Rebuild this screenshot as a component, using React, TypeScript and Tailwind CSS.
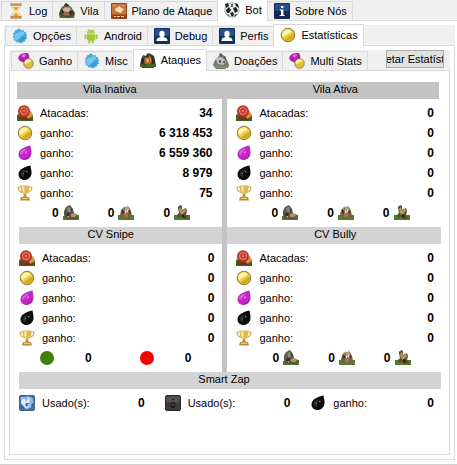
import { useState } from 'react'
import type { ReactNode } from 'react'
import clsx from 'clsx'

function Svg({ children }: { children: ReactNode }) {
  return <svg viewBox="0 0 16 16" className="size-4 shrink-0" aria-hidden="true">{children}</svg>
}

const Hourglass = () => (
  <Svg>
    <path d="M3.500 2h9c0 3-1.500 4-3 6 1.500 2 3 3 3 6h-9c0-3 1.500-4 3-6-1.500-2-3-3-3-6z" fill="#f6ecd2" stroke="#d3b274" strokeWidth=".7" />
    <path d="M5 4h6L8.500 7.500h-1zM8 9l4 5H4z" fill="#eca32b" />
    <path d="M2.500 .5h11v2h-11zM2.500 13.500h11v2h-11z" fill="#a8622c" />
    <path d="M3.500 1h9v.7h-9zM3.500 14h9v.7h-9z" fill="#e3a468" />
  </Svg>
)

const Village = () => (
  <Svg>
    <path d="M0 11l2-6 5-4 5 3 4 6-2 5H2z" fill="#3f4a2c" />
    <path d="M3 5l4-3 5 2 2 5-4 4-6-1-2-3z" fill="#7c6a56" />
    <path d="M4 6l3-2 4 1 1 3-4 1-4-1z" fill="#cdb595" />
    <path d="M5 2l2-2 3 2-2 2zM11 7l3 2-2 3-2-2zM2 7l2 0 1 3-2 1z" fill="#332a24" />
    <path d="M5 9h2v3H5zM8 10h2v2H8z" fill="#a3664a" />
    <path d="M0 12l4 1 4 1 5-1 3-2-1 4H1z" fill="#4d6b27" />
  </Svg>
)

const Plan = () => (
  <Svg>
    <rect width="16" height="16" rx="1" fill="#8b451a" />
    <path d="M1 1h14v10.500H1z" fill="#c9763a" />
    <path d="M4 6l3-2 2-1 1 2 3 1-2 2-1 2-3-1-2-1z" fill="#ffe3bf" />
    <path d="M2 2h3v1H2zM11 2h3v1h-3z" fill="#e9a066" />
    <path d="M3 13h2v1H3zM6 13h3v1H6zM10 13h3v1h-3z" fill="#f1c9a2" />
  </Svg>
)

const BotFace = () => (
  <Svg>
    <circle cx="8" cy="8" r="7.200" fill="#e4e9e6" stroke="#8b918f" strokeWidth=".7" />
    <path d="M1 2l3-1 1 3-3 2zM11 1l3 1 1 4-3-2zM2 8l3-3 2 3-2 3-2 0zM9 6l3-1 2 4-3 2zM6 11l3-1 1 3-2 2z" fill="#1e2220" />
    <path d="M3 12l2 1 1 2-2-1zM11 12l2 0-1 2-2 1zM7 2h2v3H7z" fill="#4f6a5b" />
  </Svg>
)

const Info = () => (
  <Svg>
    <rect width="16" height="16" rx="1" fill="#142850" />
    <path d="M1 1h14v7H1z" fill="#2b4d80" />
    <path d="M7 3h2.400v2H7zM6 6.500h3.400V12h1.200v1H5.600v-1H7V7.500H6z" fill="#fff" />
  </Svg>
)

const Gear = () => (
  <Svg>
    <path d="M8 1l1.400 1.500L11.300 1.800l.7 2 2.100.1-.1 2 1.300 1.100-1 1.700.7 1.900-1.700 1-.2 2-2.100.2-1 1.700-1.800-.9L7.600 15.500l-1.300-1.400-2 .5-.7-1.900-2-.4.3-2L.7 8.900l1-1.700-.8-1.800 1.700-1.100.1-2 2.100-.1 1-1.700z" fill="#48aadb" />
    <path d="M3 6l7-3 3 2-9 8-2-3z" fill="#83d0f0" opacity=".75" />
    <path d="M13 7l-7 6 3 1 4-3z" fill="#2f8fc4" opacity=".6" />
  </Svg>
)

const AndroidBot = () => (
  <Svg>
    <g fill="#a4c639">
      <path d="M4 5.600a4 3.800 0 018 0zM4 6.300h8v5.500q0 .8-.8.8H4.800q-.8 0-.8-.8z" />
      <rect x="1.500" y="6.200" width="2" height="5" rx="1" />
      <rect x="12.500" y="6.200" width="2" height="5" rx="1" />
      <rect x="5.300" y="11" width="2" height="4.500" rx="1" />
      <rect x="8.700" y="11" width="2" height="4.500" rx="1" />
    </g>
    <path d="M5.200 1l1 1.600M10.800 1l-1 1.600" stroke="#a4c639" strokeWidth=".6" />
    <circle cx="6.300" cy="4" r=".5" fill="#fff" />
    <circle cx="9.700" cy="4" r=".5" fill="#fff" />
  </Svg>
)

const Person = () => (
  <Svg>
    <rect width="16" height="16" rx="1" fill="#12305e" />
    <path d="M1 1h14v7H1z" fill="#234f8c" />
    <ellipse cx="8" cy="6" rx="2.700" ry="3.200" fill="#fff" />
    <path d="M2.500 13c0-3 2-3.500 4-4h3c2 .5 4 1 4 4z" fill="#fff" />
  </Svg>
)

const Coin = () => (
  <Svg>
    <circle cx="8" cy="8" r="6.800" fill="#dcba34" stroke="#7d6a1c" strokeWidth=".8" />
    <circle cx="8" cy="8" r="5.500" fill="#e9d04a" />
    <path d="M2.800 10a5.300 5.300 0 019-5.500z" fill="#fbf4a8" />
    <path d="M4.500 12.300l9-6a5.500 5.500 0 01-9 6z" fill="#d6ad22" />
  </Svg>
)

const DropCoin = () => (
  <Svg>
    <path d="M10 0c1 2 2 4 1 6-1 3-4 4-7 3C1 8-1 5 1 3c2-3 5-3 9-3z" fill="#b51fae" />
    <path d="M3 3c2-2 4-2 5-1L6 5z" fill="#e66be0" />
    <circle cx="10.500" cy="10.500" r="4.800" fill="#e0c03c" stroke="#806c20" strokeWidth=".7" />
    <path d="M7 11a3.600 3.600 0 016.500-3z" fill="#fff6b5" />
  </Svg>
)

const Battle = () => (
  <Svg>
    <path d="M0 13l1-5 2-5 3 1 2-3 3 1 3 2 1 4 1 6-3 2H2z" fill="#42402a" />
    <path d="M4 7l2-2 2 1 2-3 1 4 1 3-3 3-4-1z" fill="#b5622a" />
    <path d="M6 8l2-2 1 3-2 2zM10 5l1 3-1 1z" fill="#f4a955" />
    <path d="M2 5l2 3-1 3-2 1zM12 4l2 5-2 3zM7 2l1 2-2 1z" fill="#20241b" />
    <path d="M0 12l5 1 5-1 6 0v3H0z" fill="#3c6526" />
  </Svg>
)

const Castle = () => (
  <Svg>
    <path d="M0 12l2-5 3-3 2-3 5 2 3 6 1 4-4 3H3z" fill="#747a73" />
    <path d="M3 6l3-2 4 1 3 4-3 3-5-1z" fill="#bdc2ba" />
    <path d="M6 1l2-1 2 2-2 2zM11 3l2 1v2l-2-1z" fill="#6d5a5a" />
    <path d="M6 7h2v3H6zM10 8h2v2h-2z" fill="#6b5456" />
    <path d="M1 12l5 1 6 0 4-2-1 4H2z" fill="#759655" />
  </Svg>
)

const Attack = () => (
  <Svg>
    <path d="M0 10l4-2 8 0 4 2v6H0z" fill="#4a5c22" />
    <path d="M9 9l5-3 2 5-5 3z" fill="#e08f3e" />
    <circle cx="7" cy="6.200" r="6" fill="#bd3424" />
    <circle cx="7" cy="6" r="3.500" fill="none" stroke="#f5a08e" strokeWidth=".9" />
    <circle cx="7" cy="6" r="1.500" fill="#e8705c" />
    <path d="M2 11l4 1 3 0 4 3H3z" fill="#6b3a1c" />
  </Svg>
)

const Elixir = () => (
  <Svg>
    <path d="M13.500 .5c.3 3 1.300 5 1 8-.5 4-3.500 6.500-7 6.500-3.500 0-6-2.500-6-5.500C1.500 4.500 7 2 13.500 .5z" fill="#c226c4" />
    <path d="M3 9c0-3 3-5 7-5.500C8 6 6 7 5 10z" fill="#e05be3" />
    <path d="M8 13c3 0 5-2 5-5 1 4-2 6-5 6z" fill="#8d1c99" />
    <path d="M8 7l2-1-1 3z" fill="#f7a5f7" />
  </Svg>
)

const DarkElixir = () => (
  <Svg>
    <path d="M13.500 .5c.3 3 1.300 5 1 8-.5 4-3.500 6.500-7 6.500-3.500 0-6-2.500-6-5.500C1.500 4.500 7 2 13.500 .5z" fill="#0c0c0c" />
    <path d="M4 9c0-2 2-4 5-4.500L6 9l1 3c-2 0-3-1-3-3z" fill="#333" />
    <path d="M9 6.500l1.500-.8-.5 2zM6 8.500l1-.5v1.500z" fill="#bdbdbd" />
  </Svg>
)

const Trophy = () => (
  <Svg>
    <path d="M4 2H1.200C1 5 3 7 5.500 7.500M12 2h2.800C15 5 13 7 10.500 7.500" fill="none" stroke="#d5a74a" strokeWidth="1.200" />
    <path d="M3.500 .5h9c0 5-1 8-4.500 9-3.500-1-4.500-4-4.500-9z" fill="#dfb655" />
    <path d="M5 1.500h2.500v7C5.500 7 5 5 5 1.500z" fill="#f8e6a0" />
    <path d="M7 9h2l1 3.500H6z" fill="#c4923a" />
    <path d="M4 12h8l1 3.500H3z" fill="#bd8834" />
    <path d="M5 12.800h6v1.200H5z" fill="#eccb7a" />
  </Svg>
)

const Ruin = () => (
  <Svg>
    <path d="M0 11l16-1v5H0z" fill="#50782b" />
    <path d="M1 6l2-4 4-2 3 4 1 4 4 2-1 4H2l-1-4z" fill="#55554a" />
    <path d="M4 3l3-1 1 4-3 2z" fill="#87857a" />
    <path d="M8 9l3-1 3 2-2 2-4 0z" fill="#c09450" />
    <path d="M5 7l2 2-2 3-2-2zM8 3l1 2-1 2z" fill="#2a3030" />
    <path d="M6 5l1 1-1 1zM4 11l2 0 0 2z" fill="#d3a656" />
  </Svg>
)

const Hall = () => (
  <Svg>
    <path d="M0 10l16 0v5H0z" fill="#547d2d" />
    <path d="M2 10l1-5 3-3 5 0 2 4 1 5-3 2H4z" fill="#766047" />
    <path d="M5 4l2-3 1 2 2-3 1 4 1 3-4 1z" fill="#b5a68d" />
    <path d="M6 8h4v4H6z" fill="#a5705e" />
    <path d="M4 5l2 1 0 2-2 1zM10 6l2-1 0 4zM6 3l1 1-1 1z" fill="#3b332a" />
    <path d="M7 6h1v2H7zM9 5h1v2H9z" fill="#efe5d6" />
  </Svg>
)

const Archer = () => (
  <Svg>
    <path d="M0 10l16 0v5H0z" fill="#4f7c27" />
    <path d="M4 3l2-3 2 1 0 4 4-2 1 3-1 4 2 3-4 1-3-2-3 1-1-3 2-2z" fill="#5e4c2e" />
    <path d="M5 4l2-2 1 4 3-2 1 2-4 4-2-2z" fill="#b69a5c" />
    <path d="M8 9l2 1 1 3-3-1zM4 1l1 1-1 1z" fill="#242416" />
  </Svg>
)

const Lightning = () => (
  <Svg>
    <rect x=".5" y=".5" width="15" height="15" rx="1.500" fill="#4773ad" stroke="#3f5f8c" />
    <path d="M1.500 2h5l2-1 5 2 1 5-3 5-5 1-4-5z" fill="#91b9e5" />
    <path d="M3 4l3 0 1 3 3-5 1 4-2 3 2 0-3 5-3-3-3-3z" fill="#dcecfc" />
    <path d="M7 8l3 0-2 4-2-2z" fill="#3f69b0" />
    <path d="M2 10l3 3-3 1zM12 10l2-2v4z" fill="#34598f" />
  </Svg>
)

const Quake = () => (
  <Svg>
    <rect x=".5" y=".5" width="15" height="15" rx="1.500" fill="#3d3a38" stroke="#292626" />
    <path d="M1.500 1.500h13v6h-13z" fill="#575352" />
    <path d="M7 4h2l0 3 1.500 2-1 4h-3L5.500 10 7 7z" fill="#221e1d" />
    <path d="M7.500 5h1v2h-1zM7 9l2 0-1 2z" fill="#866e67" />
  </Svg>
)

type TabDef = { label: string; icon: ReactNode }

const mainTabs: TabDef[] = [
  { label: 'Log', icon: <Hourglass /> },
  { label: 'Vila', icon: <Village /> },
  { label: 'Plano de Ataque', icon: <Plan /> },
  { label: 'Bot', icon: <BotFace /> },
  { label: 'Sobre Nós', icon: <Info /> },
]

const botTabs: TabDef[] = [
  { label: 'Opções', icon: <Gear /> },
  { label: 'Android', icon: <AndroidBot /> },
  { label: 'Debug', icon: <Person /> },
  { label: 'Perfis', icon: <Person /> },
  { label: 'Estatísticas', icon: <Coin /> },
]

const statTabs: TabDef[] = [
  { label: 'Ganho', icon: <DropCoin /> },
  { label: 'Misc', icon: <Gear /> },
  { label: 'Ataques', icon: <Battle /> },
  { label: 'Doações', icon: <Castle /> },
  { label: 'Multi Stats', icon: <DropCoin /> },
]

function TabStrip({ tabs, initial }: { tabs: TabDef[]; initial: string }) {
  const [active, setActive] = useState(initial)
  return (
    <div role="tablist" className="flex h-5 items-end">
      {tabs.map(tab => (
        <button key={tab.label} role="tab" aria-selected={active === tab.label} onClick={() => setActive(tab.label)}
          className={clsx(
            'flex shrink-0 items-center gap-[5px] whitespace-nowrap border-l border-t border-[#d9d9d9] pl-[6px] pr-[5px] last:border-r',
            active === tab.label ? '-mb-px h-[22px] bg-white pb-[2px]' : 'h-[19px] bg-[#f0f0f0]'
          )}>
          {tab.icon}
          {tab.label}
        </button>
      ))}
    </div>
  )
}

const statRows = [
  { label: 'Atacadas:', icon: <Attack /> },
  { label: 'ganho:', icon: <Coin /> },
  { label: 'ganho:', icon: <Elixir /> },
  { label: 'ganho:', icon: <DarkElixir /> },
  { label: 'ganho:', icon: <Trophy /> },
]

function StatList({ values, className }: { values: string[]; className: string }) {
  return (
    <dl className={className}>
      {statRows.map((row, i) => (
        <div key={i} className="flex h-5 items-center">
          {row.icon}
          <dt className="ml-[7px]">{row.label}</dt>
          <dd className="ml-auto text-[12px] font-bold">{values[i]}</dd>
        </div>
      ))}
    </dl>
  )
}

function Leagues({ className }: { className: string }) {
  return (
    <div className={clsx('flex h-5 items-center gap-[29px]', className)}>
      {[<Ruin />, <Hall />, <Archer />].map((icon, i) => (
        <span key={i} className="flex items-center gap-1 text-[12px] font-bold">0{icon}</span>
      ))}
    </div>
  )
}

const zeros = ['0', '0', '0', '0', '0']

export default function App() {
  return (
    <main className="border-b border-[#d0d0d0] bg-white pb-[2px] font-['Liberation_Sans',Arial,sans-serif] text-[11px] leading-4 text-black">
      <div className="h-[21px] border-b border-[#d9d9d9] bg-[#f0f0f0] pl-px">
        <TabStrip tabs={mainTabs} initial="Bot" />
      </div>

      <div className="pb-[2px] pl-1 pr-[2px] pt-1">
        <div className="h-5 bg-[#f0f0f0] pl-px">
          <TabStrip tabs={botTabs} initial="Estatísticas" />
        </div>

        <div className="border border-[#d9d9d9] bg-white p-1">
          <div className="flex h-5 items-start justify-between bg-[#f0f0f0] pl-[2px] pr-[6px]">
            <TabStrip tabs={statTabs} initial="Ataques" />
            <button className="flex h-[18px] w-[58px] items-center justify-center overflow-hidden whitespace-nowrap border border-[#adadad] bg-[#e1e1e1]">
              etar Estatíst
            </button>
          </div>

          <div className="border border-[#d9d9d9] bg-white pb-[41px] pt-[11px]">
            <div className="ml-[7px] mr-[10px] grid grid-cols-[205fr_5px_211fr]">
              <section>
                <h2 className="h-[17px] bg-[#c3c3c3] pr-5 text-center leading-[14px]">Vila Inativa</h2>
                <StatList className="pr-[10px] pt-[4px]" values={['34', '6 318 453', '6 559 360', '8 979', '75']} />
                <Leagues className="pl-[35px]" />
              </section>
              <div className="bg-[#c3c3c3]" />
              <section className="pb-1">
                <h2 className="h-[17px] bg-[#c3c3c3] pl-1 text-center leading-[14px]">Vila Ativa</h2>
                <StatList className="pl-[9px] pr-[5px] pt-[4px]" values={zeros} />
                <Leagues className="pl-[44px]" />
              </section>
            </div>

            <div className="ml-[9px] mr-[8px] grid grid-cols-[203fr_5px_213fr]">
              <section>
                <h2 className="h-[17px] bg-[#d3d3d3] pr-5 text-center leading-[14px]">CV Snipe</h2>
                <StatList className="pr-[8px] pt-[4px]" values={zeros} />
                <div className="flex h-5 items-center pl-[21px] text-[12px] font-bold">
                  <span className="size-[14px] rounded-full bg-[#3f7f0a]" />
                  <span className="ml-[31px]">0</span>
                  <span className="ml-[48px] size-[14px] rounded-full bg-[#f80000]" />
                  <span className="ml-[31px]">0</span>
                </div>
              </section>
              <div className="bg-[#c3c3c3]" />
              <section className="pb-[4px]">
                <h2 className="h-[17px] bg-[#d3d3d3] pl-[2px] text-center leading-[14px]">CV Bully</h2>
                <StatList className="pl-[9px] pr-[7px] pt-[4px]" values={zeros} />
                <Leagues className="pl-[45px]" />
              </section>
            </div>

            <section className="ml-[9px] mr-[8px]">
              <h2 className="h-[17px] bg-[#d3d3d3] pr-3 text-center leading-[14px]">Smart Zap</h2>
              <dl className="grid grid-cols-[125fr_125fr_123fr] gap-x-5 pr-[7px] pt-[4px]">
                {[
                  { label: 'Usado(s):', icon: <Lightning /> },
                  { label: 'Usado(s):', icon: <Quake /> },
                  { label: 'ganho:', icon: <DarkElixir /> },
                ].map((item, i) => (
                  <div key={i} className="flex h-5 items-center">
                    {item.icon}
                    <dt className="ml-[7px]">{item.label}</dt>
                    <dd className="ml-auto text-[12px] font-bold">0</dd>
                  </div>
                ))}
              </dl>
            </section>
          </div>
        </div>
      </div>
    </main>
  )
}
